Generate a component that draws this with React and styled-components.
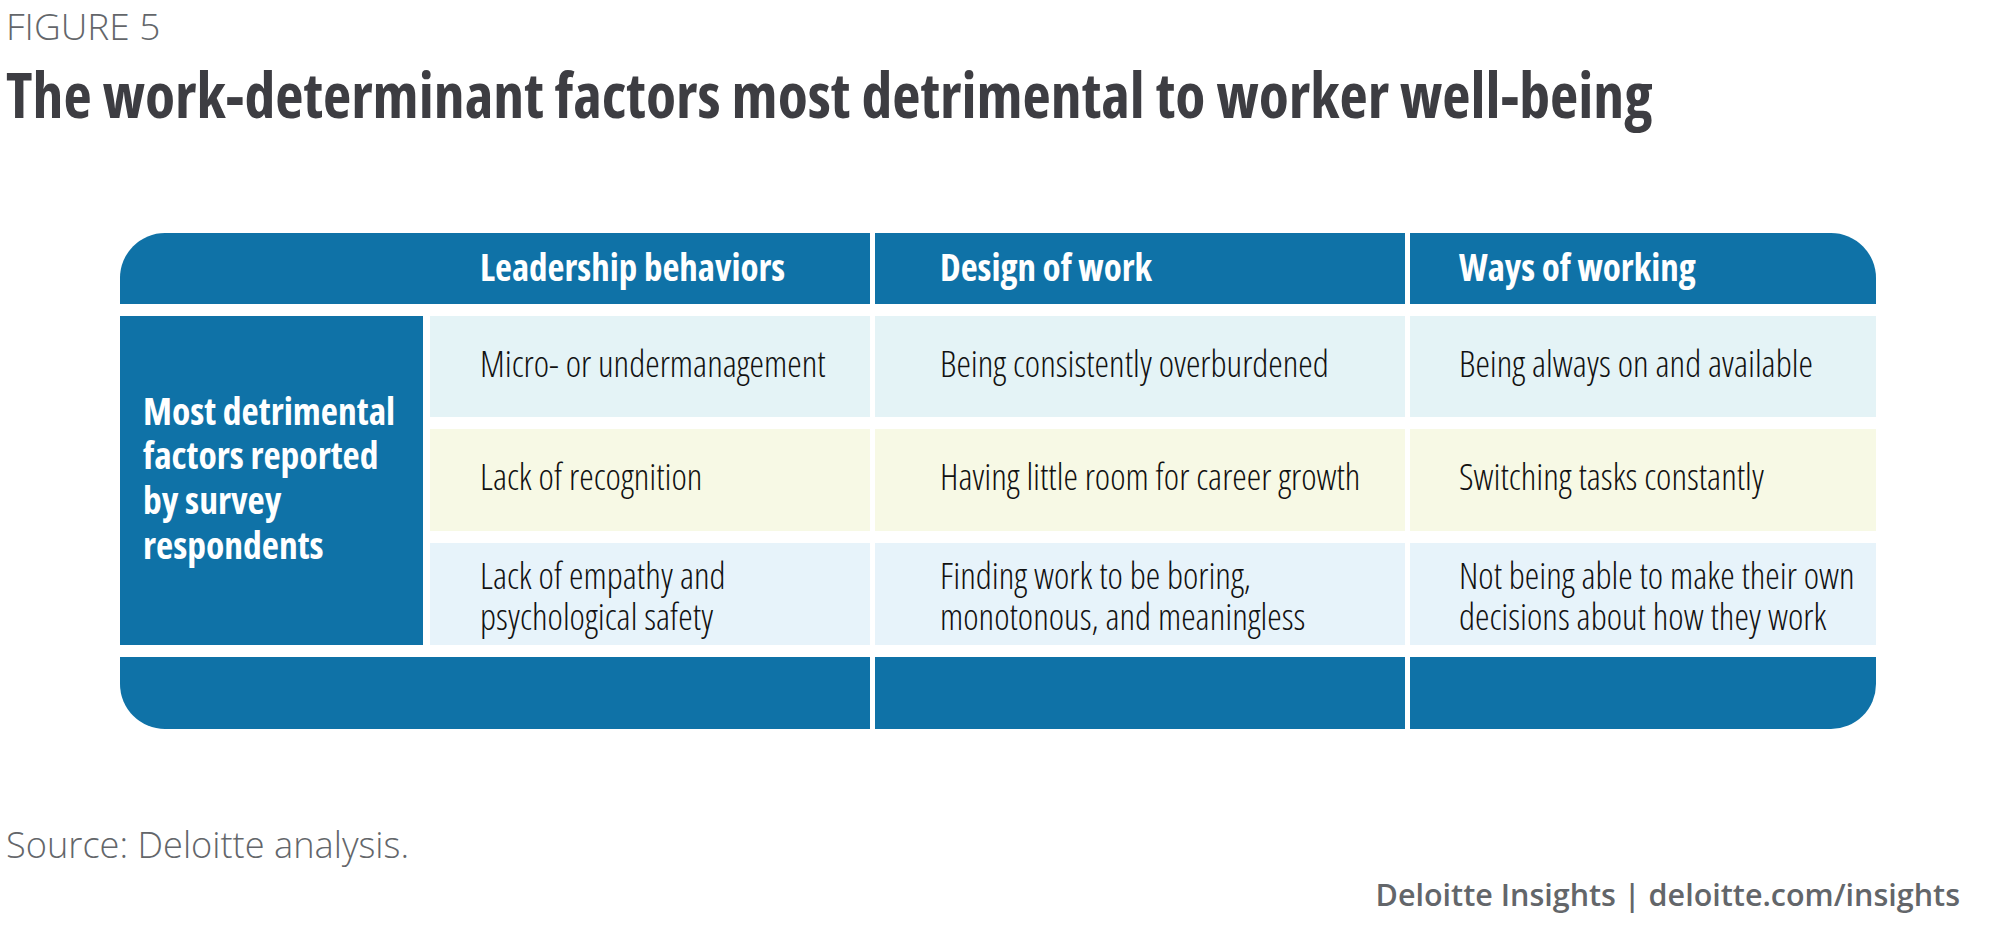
import React from "react";
import styled, { createGlobalStyle } from "styled-components";

const Global = createGlobalStyle`
  html, body { margin: 0; padding: 0; background: #ffffff; }
  body { font-family: "Open Sans", "Liberation Sans", sans-serif; }
`;

const Page = styled.div`
  width: 2000px;
  height: 949px;
  box-sizing: border-box;
  padding: 0 40px 0 6px;
  display: flex;
  flex-direction: column;
  overflow: hidden;
`;

const Eyebrow = styled.div`
  font-family: "Open Sans", sans-serif;
  font-weight: 300;
  font-size: 37px;
  line-height: 51px;
  color: #63666a;
`;

const Title = styled.h1`
  margin: 7px 0 0 0;
  font-family: "Open Sans", sans-serif;
  font-stretch: 75%;
  font-weight: 700;
  font-size: 61.7px;
  line-height: 72px;
  color: #3d3d42;
`;

const Table = styled.div`
  margin: 103px 0 0 114px;
  width: 1756px;
  display: grid;
  grid-template-columns: 305px 440px 530px 466px;
  grid-template-rows: 71px 101px 102px 102px 72px;
  column-gap: 5px;
  row-gap: 12px;
`;

const Band = styled.div`
  background: #0f72a7;
  grid-column: ${(p) => p.$col};
  display: flex;
  align-items: center;
  padding-left: ${(p) => p.$pad || 0}px;
  border-top-left-radius: ${(p) => (p.$tl ? "45px" : "0")};
  border-top-right-radius: ${(p) => (p.$tr ? "45px" : "0")};
  border-bottom-left-radius: ${(p) => (p.$bl ? "45px" : "0")};
  border-bottom-right-radius: ${(p) => (p.$br ? "45px" : "0")};
`;

const HeadText = styled.span`
  font-family: "Open Sans", sans-serif;
  font-stretch: 75%;
  font-weight: 700;
  font-size: 37px;
  line-height: 44px;
  color: #ffffff;
  padding-bottom: 4px;
`;

const Label = styled.div`
  grid-column: 1;
  grid-row: 2 / span 3;
  margin-right: 2px;
  background: #0f72a7;
  display: flex;
  align-items: center;
  padding: 0 12px 5px 23px;
  font-family: "Open Sans", sans-serif;
  font-stretch: 75%;
  font-weight: 700;
  font-size: 37.5px;
  line-height: 44.6px;
  color: #ffffff;
`;

const Cell = styled.div`
  background: ${(p) => p.$bg};
  display: flex;
  align-items: center;
  padding: ${(p) => (p.$multi ? "3px 8px 0" : "0 8px 7px")} ${(p) => p.$pad}px;
  font-family: "Open Sans", sans-serif;
  font-stretch: 75%;
  font-weight: 300;
  font-size: 36.6px;
  line-height: 41px;
  color: #111111;
`;

const Source = styled.div`
  margin-top: 95px;
  font-family: "Open Sans", sans-serif;
  font-weight: 300;
  font-size: 36.2px;
  line-height: 40px;
  color: #63666a;
`;

const Credit = styled.div`
  margin-top: 10px;
  align-self: flex-end;
  font-family: "Open Sans", sans-serif;
  font-weight: 600;
  font-size: 30.5px;
  line-height: 40px;
  color: #63666a;
`;

const pads = [50, 65, 49];
const rows = [
  {
    bg: "#e4f3f6",
    items: ["Micro- or undermanagement", "Being consistently overburdened", "Being always on and available"],
  },
  {
    bg: "#f7f9e5",
    items: ["Lack of recognition", "Having little room for career growth", "Switching tasks constantly"],
  },
  {
    bg: "#e7f3fa",
    items: [
      ["Lack of empathy and", "psychological safety"],
      ["Finding work to be boring,", "monotonous, and meaningless"],
      ["Not being able to make their own", "decisions about how they work"],
    ],
  },
];

function Lines({ value }) {
  if (Array.isArray(value)) {
    return (
      <span>
        {value.map((v, i) => (
          <React.Fragment key={i}>
            {v}
            {i < value.length - 1 && <br />}
          </React.Fragment>
        ))}
      </span>
    );
  }
  return <span>{value}</span>;
}

export default function App() {
  return (
    <>
      <Global />
      <Page>
        <Eyebrow>FIGURE 5</Eyebrow>
        <Title>The work-determinant factors most detrimental to worker well-being</Title>
        <Table>
          <Band $col="1 / span 2" $pad={360} $tl>
            <HeadText>Leadership behaviors</HeadText>
          </Band>
          <Band $col="3" $pad={65}>
            <HeadText>Design of work</HeadText>
          </Band>
          <Band $col="4" $pad={49} $tr>
            <HeadText>Ways of working</HeadText>
          </Band>

          <Label>
            <span>
              Most detrimental
              <br />
              factors reported
              <br />
              by survey
              <br />
              respondents
            </span>
          </Label>

          {rows.map((r, ri) =>
            r.items.map((it, ci) => (
              <Cell key={`${ri}-${ci}`} $bg={r.bg} $pad={pads[ci]} $multi={Array.isArray(it)}>
                <Lines value={it} />
              </Cell>
            ))
          )}

          <Band $col="1 / span 2" $bl />
          <Band $col="3" />
          <Band $col="4" $br />
        </Table>
        <Source>Source: Deloitte analysis.</Source>
        <Credit>Deloitte Insights | deloitte.com/insights</Credit>
      </Page>
    </>
  );
}
